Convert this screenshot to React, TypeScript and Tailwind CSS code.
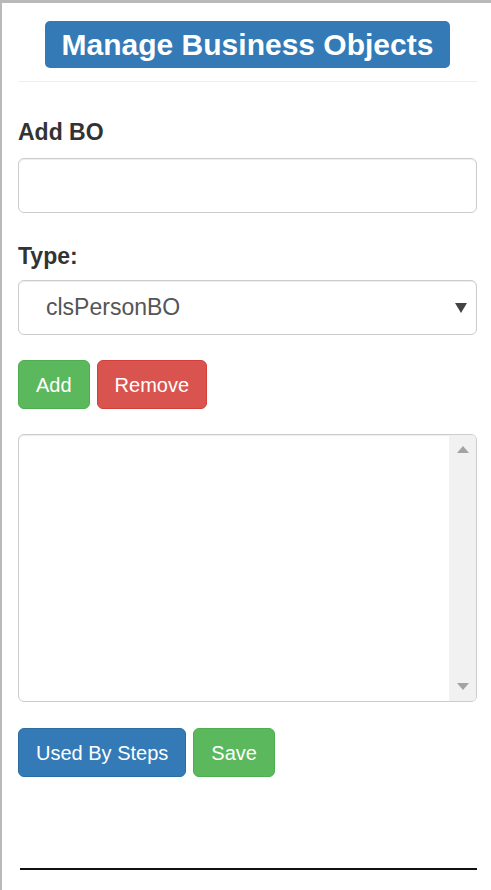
import React from "react";

export default function App() {
  return (
    <div
      className="min-h-[890px] border-t-[3px] border-l-2 border-[#b9b9b9] bg-white pl-4 pr-[14px] text-[#333]"
      style={{ fontFamily: '"Liberation Sans", Arial, sans-serif' }}
    >
      <div className="flex justify-center pt-[18px]">
        <h2 className="h-[47px] rounded-[5px] bg-[#337ab7] px-[17px] text-[30px] font-bold leading-[47px] text-white">
          Manage Business Objects
        </h2>
      </div>
      <div className="mt-[13px] border-t border-[#eeeeee]" />

      <div className="mt-[35px] h-[30px] text-[23px] font-bold leading-[30px]">Add BO</div>
      <div className="mt-[11px] h-[55px] rounded-[6px] border border-[#cccccc] bg-white shadow-[inset_0_1px_1px_rgba(0,0,0,0.075)]" />

      <div className="mt-[28px] h-[30px] text-[23px] font-bold leading-[30px]">Type:</div>
      <div className="mt-[9px] flex h-[55px] items-center justify-between rounded-[6px] border border-[#cccccc] bg-white pl-[27px] pr-[8px] shadow-[inset_0_1px_1px_rgba(0,0,0,0.075)]">
        <span className="text-[23px] text-[#555]">clsPersonBO</span>
        <svg width="12" height="11" viewBox="0 0 12 11" className="mr-[1px]">
          <polygon points="0,1 12,1 6,11" fill="#444" />
        </svg>
      </div>

      <div className="mt-[25px] flex gap-[7px]">
        <button className="h-[49px] rounded-[6px] border border-[#4cae4c] bg-[#5cb85c] px-[17px] text-[20px] text-white">
          Add
        </button>
        <button className="h-[49px] rounded-[6px] border border-[#d43f3a] bg-[#d9534f] px-[17px] text-[20px] text-white">
          Remove
        </button>
      </div>

      <div className="mt-[25px] flex h-[268px] overflow-hidden rounded-[6px] border border-[#cccccc] bg-white shadow-[inset_0_1px_1px_rgba(0,0,0,0.075)]">
        <div className="flex-1" />
        <div className="flex w-[27px] flex-col items-center justify-between bg-[#f1f1f1] py-[11px]">
          <svg width="12" height="7" viewBox="0 0 12 7">
            <polygon points="0,7 12,7 6,0" fill="#a3a3a3" />
          </svg>
          <svg width="12" height="7" viewBox="0 0 12 7">
            <polygon points="0,0 12,0 6,7" fill="#a3a3a3" />
          </svg>
        </div>
      </div>

      <div className="mt-[26px] flex gap-[7px]">
        <button className="h-[49px] rounded-[6px] border border-[#2e6da4] bg-[#337ab7] px-[17px] text-[20px] text-white">
          Used By Steps
        </button>
        <button className="h-[49px] rounded-[6px] border border-[#4cae4c] bg-[#5cb85c] px-[17px] text-[20px] text-white">
          Save
        </button>
      </div>

      <div className="ml-[2px] mt-[91px] h-[2px] bg-[#111]" />
    </div>
  );
}
